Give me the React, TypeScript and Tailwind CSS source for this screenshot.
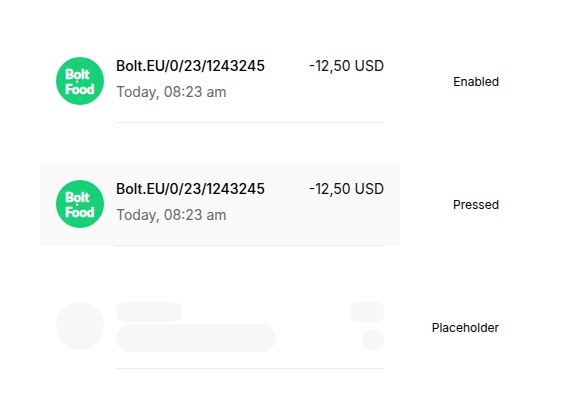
import type { ReactNode } from 'react';
import { clsx } from 'clsx';

interface Transaction {
  title: string;
  date: string;
  amount: string;
}

const transaction: Transaction = {
  title: 'Bolt.EU/0/23/1243245',
  date: 'Today, 08:23 am',
  amount: '-12,50 USD',
};

function BoltFoodLogo() {
  return (
    <svg viewBox="0 0 48 48" className="w-12 h-12 shrink-0" role="img" aria-label="Bolt Food">
      <circle cx="24" cy="24" r="24" fill="#18d077" />
      <g className="font-['Lato',sans-serif] font-black text-[13px]" fill="#fff" stroke="#fff" strokeWidth="0.5" strokeLinejoin="round">
        <text x="9" y="22">Bolt</text>
        <text x="9" y="37">Food</text>
      </g>
      <circle cx="21" cy="24.8" r="1.2" fill="#fff" />
    </svg>
  );
}

function TransactionRow({ title, date, amount, pressed = false }: Transaction & { pressed?: boolean }) {
  return (
    <button
      type="button"
      className={clsx('flex w-full gap-3 px-4 text-left', pressed ? 'bg-[#fafafa]' : 'bg-white')}
    >
      <span className="pt-[17px]">
        <BoltFoodLogo />
      </span>
      <span className="flex flex-1 justify-between border-b border-[#ececec] pt-4 pb-5 text-sm leading-5">
        <span className="flex flex-col gap-1.5">
          <span className="font-medium text-black">{title}</span>
          <span className="text-[#686868]">{date}</span>
        </span>
        <span className="text-[#111]">{amount}</span>
      </span>
    </button>
  );
}

function PlaceholderRow() {
  return (
    <div className="flex gap-3 px-4" aria-hidden="true">
      <div className="pt-4">
        <div className="w-12 h-12 rounded-full bg-[#f7f7f7]" />
      </div>
      <div className="flex flex-1 justify-between border-b border-[#ececec] pt-4 pb-4">
        <div className="flex flex-col gap-0.5">
          <div className="w-[66px] h-5 rounded-lg bg-[#f7f7f7]" />
          <div className="w-40 h-7 rounded-full bg-[#f7f7f7]" />
        </div>
        <div className="flex flex-col items-end gap-2">
          <div className="w-[34px] h-5 rounded-lg bg-[#f7f7f7]" />
          <div className="w-[22px] h-5 rounded-lg bg-[#f7f7f7]" />
        </div>
      </div>
    </div>
  );
}

function Variant({ label, children }: { label: string; children: ReactNode }) {
  return (
    <section className="flex items-center">
      <div className="flex-1">{children}</div>
      <h2 className="w-[99px] text-right text-xs text-black">{label}</h2>
    </section>
  );
}

export default function App() {
  return (
    <main className="flex min-h-screen flex-col gap-10 bg-white py-10 pl-10 pr-[81px] font-['Inter',sans-serif]">
      <Variant label="Enabled">
        <TransactionRow {...transaction} />
      </Variant>
      <Variant label="Pressed">
        <TransactionRow {...transaction} pressed />
      </Variant>
      <Variant label="Placeholder">
        <PlaceholderRow />
      </Variant>
    </main>
  );
}
